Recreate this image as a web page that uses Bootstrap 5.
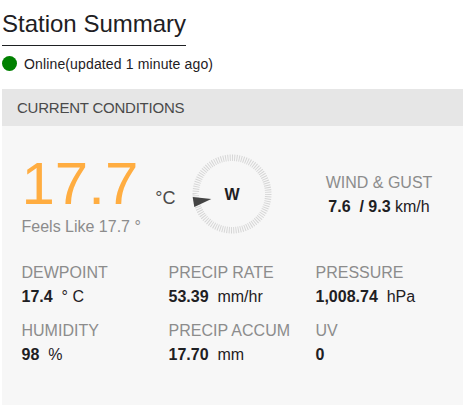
<!DOCTYPE html>
<html lang="en">
<head>
  <meta charset="UTF-8">
  <meta name="viewport" content="width=device-width, initial-scale=1.0">
  <title>Station Summary</title>
  <link href="https://cdn.jsdelivr.net/npm/bootstrap@5.3.0/dist/css/bootstrap.min.css" rel="stylesheet">
  <style>
    body {
      font-family: "Liberation Sans", Arial, sans-serif;
      font-size: 16px;
      line-height: 24px;
      color: #1e2023;
      background-color: #fff;
      overflow: hidden;
    }
    .station {
      width: 461px;
      height: 405px;
      margin-left: 2px;
    }
    .station-title {
      font-size: 24px;
      font-weight: 400;
      line-height: 29px;
      padding: 9px 0 7px;
      border-bottom: 1px solid #1e2023;
    }
    .station-status {
      font-size: 14px;
      line-height: 20px;
      letter-spacing: 0.14px;
      gap: 7px;
      margin-top: 8px;
      margin-bottom: 15px;
    }
    .status-dot {
      width: 15px;
      height: 15px;
      margin-bottom: 1px;
      background-color: #008000;
    }
    .panel-title {
      height: 37px;
      line-height: 37px;
      font-size: 15px;
      letter-spacing: -0.23px;
      padding-left: 15px;
      color: #4a4a4a;
      background-color: #e6e6e6;
    }
    .panel-body {
      padding: 27px 0 0 19.5px;
      background-color: #f7f7f7;
    }
    .temp-col {
      width: 169.5px;
      padding-top: 1px;
    }
    .temp-value {
      font-size: 60px;
      line-height: 60px;
      color: #ffad41;
    }
    .temp-unit {
      font-size: 18px;
      padding-left: 1px;
      color: #4a4a4a;
    }
    .label-text {
      color: #8c8c8c;
    }
    .feels-like {
      padding-top: 1px;
    }
    .wind-dial {
      width: 82px;
      height: 82px;
    }
    .wind-col {
      width: 148px;
      margin-left: 32px;
      padding-top: 18px;
    }
    .readings {
      margin-top: 22px;
      row-gap: 10px;
    }
    .reading {
      width: 147px;
    }
  </style>
</head>
<body>
  <div class="station d-flex flex-column">
    <!-- Heading -->
    <h1 class="station-title align-self-start mb-0">Station Summary</h1>
    <div class="station-status d-flex align-items-center">
      <span class="status-dot rounded-circle"></span>
      <span>Online(updated 1 minute ago)</span>
    </div>

    <!-- Current conditions -->
    <div class="panel-title">CURRENT CONDITIONS</div>
    <div class="panel-body flex-grow-1">
      <div class="d-flex align-items-start">
        <div class="temp-col">
          <div class="d-flex align-items-baseline">
            <span class="temp-value">17.7</span>
            <span class="temp-unit ms-3">°C</span>
          </div>
          <div class="label-text feels-like">Feels Like 17.7 °</div>
        </div>
        <svg class="wind-dial" viewBox="-41 -41 82 82">
          <circle r="36.25" fill="none" stroke="#d5d5d5" stroke-width="6.5" pathLength="100" stroke-dasharray="0.42 0.58"/>
          <path d="M-39.3 3L-20.7 5L-37.7 13Z" fill="#444"/>
          <text y="5.5" text-anchor="middle" font-size="16" font-weight="700" fill="#1e2023">W</text>
        </svg>
        <div class="wind-col text-center">
          <div class="label-text">WIND &amp; GUST</div>
          <div><strong>7.6 &nbsp;/ 9.3</strong> km/h</div>
        </div>
      </div>

      <!-- Readings -->
      <div class="readings d-flex flex-wrap">
        <div class="reading">
          <div class="label-text">DEWPOINT</div>
          <div><strong>17.4</strong> &nbsp;° C</div>
        </div>
        <div class="reading">
          <div class="label-text">PRECIP RATE</div>
          <div><strong>53.39</strong> &nbsp;mm/hr</div>
        </div>
        <div class="reading">
          <div class="label-text">PRESSURE</div>
          <div><strong>1,008.74</strong> &nbsp;hPa</div>
        </div>
        <div class="reading">
          <div class="label-text">HUMIDITY</div>
          <div><strong>98</strong> &nbsp;%</div>
        </div>
        <div class="reading">
          <div class="label-text">PRECIP ACCUM</div>
          <div><strong>17.70</strong> &nbsp;mm</div>
        </div>
        <div class="reading">
          <div class="label-text">UV</div>
          <div><strong>0</strong></div>
        </div>
      </div>
    </div>
  </div>
  <script src="https://cdn.jsdelivr.net/npm/bootstrap@5.3.0/dist/js/bootstrap.bundle.min.js"></script>
</body>
</html>
